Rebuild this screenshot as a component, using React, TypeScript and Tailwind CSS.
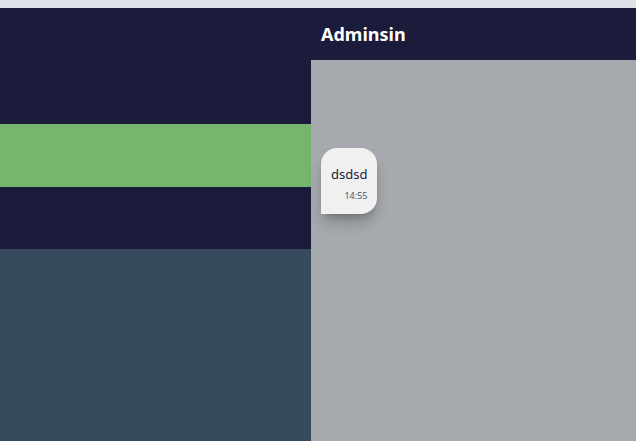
export default function App() {
  return (
    <div className="h-[441px] w-[636px] overflow-hidden bg-[#dde1e8] pt-2 font-['Noto_Sans',sans-serif]">
      {/* HEADER */}
      <header className="flex h-[52px] items-center bg-[#1b1b3b]">
        <div className="w-[311px]" />
        <h1 className="pl-[10px] text-lg font-bold text-white">Adminsin</h1>
      </header>

      <div className="flex h-[381px]">
        {/* SIDEBAR */}
        <aside className="flex w-[311px] flex-col">
          <div className="h-16 bg-[#1b1b3b]" />
          <div className="h-[63px] bg-[#75b56e]" />
          <div className="h-[62px] bg-[#1b1b3b]" />
          <div className="flex-1 bg-[#36495d]" />
        </aside>

        {/* CHAT */}
        <main className="flex-1 bg-[#a6a9ad] px-[10px] pt-[88px]">
          <div className="inline-flex flex-col rounded-t-2xl rounded-br-2xl bg-[#f0f0f0] px-[10px] pt-[16px] pb-[12px] shadow-lg shadow-black/25">
            <span className="text-[13px] leading-5 text-[#1b1b3b]">dsdsd</span>
            <span className="mt-[6px] self-end text-[9px] leading-3 text-gray-600">14:55</span>
          </div>
        </main>
      </div>
    </div>
  );
}
